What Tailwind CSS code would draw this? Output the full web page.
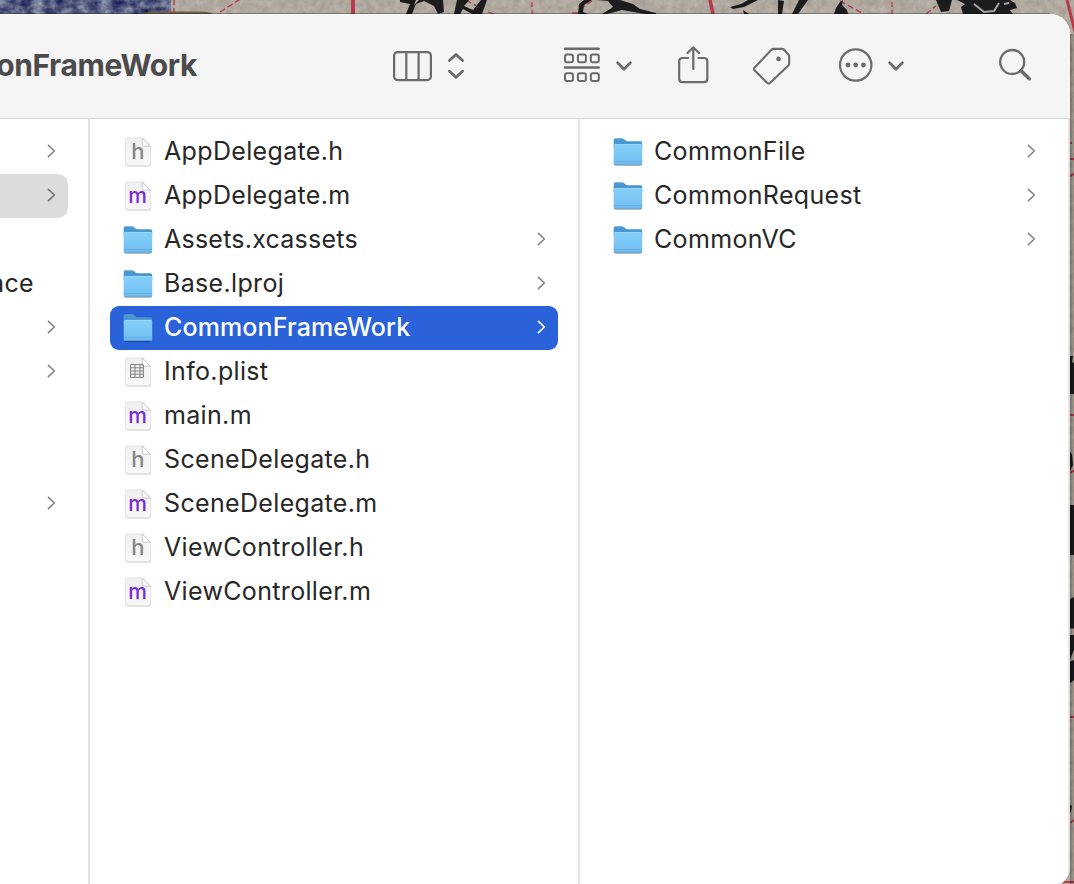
<!DOCTYPE html>
<html lang="en">
<head>
<meta charset="utf-8">
<title>CommonFrameWork</title>
<script src="https://cdn.jsdelivr.net/npm/@tailwindcss/browser@4"></script>
</head>
<body class="relative h-[884px] w-[1074px] overflow-hidden bg-[#a59c92] font-[Inter,'Liberation_Sans',sans-serif]">

<!-- desktop wallpaper -->
<svg class="absolute inset-0" width="1074" height="884" fill="none">
  <defs>
    <filter id="ink" x="0" y="0" width="100%" height="100%" color-interpolation-filters="sRGB">
      <feTurbulence type="fractalNoise" baseFrequency=".09 .12" numOctaves="4" seed="4"/>
      <feColorMatrix values=".8 0 0 0 -.06  .8 0 0 0 -.03  .6 0 0 0 .21  0 0 0 0 1"/>
    </filter>
    <filter id="paper" x="0" y="0" width="100%" height="100%" color-interpolation-filters="sRGB">
      <feTurbulence type="fractalNoise" baseFrequency=".15" numOctaves="3" seed="8"/>
      <feColorMatrix values=".14 0 0 0 .62  .14 0 0 0 .59  .14 0 0 0 .55  0 0 0 0 1"/>
    </filter>
    <linearGradient id="side" x1="0" x2="1"><stop stop-color="#000" stop-opacity=".35"/><stop offset="1" stop-color="#000" stop-opacity=".08"/></linearGradient>
  </defs>
  <rect x="170" width="904" height="24" filter="url(#paper)"/>
  <rect x="1048" width="26" height="884" filter="url(#paper)"/>
  <rect width="171" height="16" filter="url(#ink)"/>
  <path d="M142 14Q146 11 158 11.500H202Q210 12 213 14Z" fill="#70614d"/>
  <g stroke="#b93849" stroke-width="1.300">
    <path d="M174 0V14M532 2V14M892 2V14" stroke-dasharray="5 3"/>
    <path d="M220 12L242-2M580 9L592 1M466 0L480 8M488 12L494 14M572 13H578M840 1L864 14M926 14L936 6" stroke-dasharray="6 3"/>
    <path d="M353 0V14" stroke-width="4"/><path d="M710 0L713 14" stroke-width="3.500"/><path d="M1067 0L1075 32" stroke-width="3"/>
  </g>
  <g fill="#1c1b1e">
    <path d="M406 14L410 4L400 2V0H416L414 5L419 0H443L444 12L438 14L434 6L424 1L416 4L412 14Z"/>
    <path d="M454 14L457 0H469L464 6L473 10L481 0H487L482 14H472L463 9L460 14Z"/>
    <path d="M578 14L579 4L584 0H592L584 5L583 12L588 14ZM597 0H620L633 4L640 9L656 13V14H645L622 10L607 14H602L613 7L608 1Z"/>
    <path d="M730 7L741 4L748 0H758L744 7L733 9ZM743 10L749 14H744ZM778 0L784 1L782 14H778ZM799 0L808 0L798 14H792ZM834 14L836 8L840 2L843 0L842 5L847 10L848 14Z"/>
    <path d="M936 0H952L949 11L941 12Z"/>
    <path d="M957 0H1010L1015 3L1017 8L1010 10L1013 14H963L961 7L965 4Z"/>
    <path d="M1069 356H1073L1072 362L1074 363V394H1069ZM1069 451L1072 454L1073 465L1069 473ZM1069 505H1074V555H1069ZM1072 598L1074 597V632L1069 631V600ZM1069 635H1074V650L1069 662ZM1069 662L1074 660V680L1069 684ZM1069 804L1072 806L1071 812L1069 813Z"/>
  </g>
  <path d="M974 4L984 12L994 11L999 3M1004 4L1009 3" stroke="#a9a4a0" stroke-width="2"/>
  <path d="M1069 159H1074M1069 415H1074M1069 473L1074 471M1069 717H1074M1070 823L1074 820M1060 882H1074M1070 176L1074 174M1070 143H1072" stroke="#b93849" stroke-width="2"/>
  <path d="M1070 631H1074" stroke="#b9a49c" stroke-width="5"/>
  <rect x="1070" y="34" width="4" height="850" fill="url(#side)"/>
  <path d="M0 13.500H1050" stroke="#000" stroke-opacity=".3"/>
</svg>

<!-- shared icons -->
<svg width="0" height="0" class="absolute">
  <defs>
    <linearGradient id="fg" x1="0" y1="0" x2="0" y2="1"><stop stop-color="#86d0fa"/><stop offset="1" stop-color="#6fbdf0"/></linearGradient>
    <linearGradient id="fb" x1="0" y1="0" x2="0" y2="1"><stop stop-color="#519fd6"/><stop offset="1" stop-color="#3584c8"/></linearGradient>
    <linearGradient id="pg" x1="0" y1="0" x2="0" y2="1"><stop stop-color="#f0f0f0"/><stop offset="1" stop-color="#f8f8f8"/></linearGradient>
    <symbol id="folder" viewBox="0 0 32 32">
      <path d="M2 28.300H30Q29.500 30 28 30H4Q2.300 30 2 28.300Z" fill="#000" opacity=".28"/>
      <path d="M1.700 4Q1.700 2.300 3.300 2.300H10Q11.200 2.300 12.300 3.300L13.500 4.500Q14.300 5.200 15.500 5.200H28.500Q30.200 5.200 30.200 7V12H1.700Z" fill="url(#fb)"/>
      <path d="M1.700 9.500Q1.700 8 3.200 8H28.700Q30.200 8 30.200 9.500V27.500Q30.200 28.800 28.900 28.800H3Q1.700 28.800 1.700 27.500Z" fill="url(#fg)"/>
      <path d="M2.500 8.300H29.500" stroke="#a3dcfb" stroke-width=".7"/>
      <path d="M1.700 25.500H30.200" stroke="#5fabdc" stroke-width=".8"/>
      <path d="M1.900 28.400H30" stroke="#529fd3" stroke-width=".7"/>
    </symbol>
    <symbol id="page" viewBox="0 0 32 32">
      <path d="M3.300 28Q3.500 30.600 6 30.600H26Q28.600 30.600 28.800 28Z" fill="#000" opacity=".2"/>
      <path d="M3.500 4.200Q3.500 1.800 5.900 1.800H20.500L28.500 9.800V27.200Q28.500 29.700 26 29.700H6Q3.500 29.700 3.500 27.200Z" fill="url(#pg)" stroke="#d9d9d9" stroke-width=".6"/>
      <path d="M20.200 2V8.300Q20.200 10.100 22 10.100H28.300Z" fill="#fff" stroke="#bdbdbd" stroke-width=".8"/>
    </symbol>
    <symbol id="table" viewBox="0 0 32 32">
      <use href="#page"/>
      <path d="M8.600 8.600H21.400V21.400H8.600ZM8.600 11.800H21.400M8.600 15H21.400M8.600 18.200H21.400M13 8.600V21.400M18 8.600V21.400" fill="none" stroke="#808080" stroke-width="1"/>
    </symbol>
    <symbol id="chev" viewBox="0 0 10 14">
      <path d="M2.400 1.400L8.400 7L2.400 12.600" fill="none" stroke="currentColor" stroke-width="1.600" stroke-linecap="round" stroke-linejoin="round"/>
    </symbol>
    <symbol id="down" viewBox="0 0 18 12">
      <path d="M2.600 2.700L9 9.200L15.400 2.700" fill="none" stroke="currentColor" stroke-width="2.700" stroke-linecap="round" stroke-linejoin="round"/>
    </symbol>
  </defs>
</svg>

<main class="relative mt-[14px] flex h-[873px] w-[1070px] flex-col overflow-hidden rounded-r-[20px] bg-white">
  <header class="flex h-[105px] shrink-0 border-b border-[#d6d6d6] bg-[#f5f5f5] pb-[2px] text-[#6b6b6b] shadow-[inset_0_1px_0_#fff]">
    <h1 class="flex w-[197px] items-center justify-end whitespace-nowrap text-[30px] font-[650] tracking-[-0.4px] text-[#4b4b4b]"><span>CommonFrameWork</span></h1>
    <div class="ml-[195px] flex items-center gap-[14px] pt-px">
      <svg width="41" height="34" fill="none" stroke="currentColor" stroke-width="2.200"><rect x="2.100" y="3.100" width="36.800" height="28" rx="3.500"/><path d="M14.300 3V31M26.600 3V31"/></svg>
      <svg width="18" height="30" fill="none" stroke="currentColor" stroke-width="2.700" stroke-linecap="round" stroke-linejoin="round"><path d="M2.400 9.600L9 3.500L15.600 9.600M2.400 20.200L9 26.300L15.600 20.200"/></svg>
    </div>
    <div class="ml-[98px] flex items-center gap-[14px]">
      <svg width="38" height="38" fill="none" stroke="currentColor" stroke-width="2"><path d="M2 2.700H35.800M2 21.500H35.800" stroke-width="2.400" stroke-linecap="round"/><rect x="2" y="8.400" width="8" height="7.800" rx="2"/><rect x="14.900" y="8.400" width="8" height="7.800" rx="2"/><rect x="27.800" y="8.400" width="8" height="7.800" rx="2"/><rect x="2" y="27.200" width="8" height="7.800" rx="2"/><rect x="14.900" y="27.200" width="8" height="7.800" rx="2"/><rect x="27.800" y="27.200" width="8" height="7.800" rx="2"/></svg>
      <svg class="mt-[2px]" width="18" height="12"><use href="#down"/></svg>
    </div>
    <svg class="ml-[43.5px] self-center" width="33" height="40" fill="none" stroke="currentColor" stroke-width="2.200" stroke-linecap="round" stroke-linejoin="round"><path d="M11 13H5.500Q2.200 13 2.200 16.300V34Q2.200 37.200 5.500 37.200H27Q30.300 37.200 30.300 34V16.300Q30.300 13 27 13H21.500M16.300 24V2.500M10.500 8L16.300 2.300L22 8"/></svg>
    <svg class="ml-[42px] mt-px self-center" width="40" height="40" fill="none" stroke="currentColor" stroke-width="2.100" stroke-linejoin="round"><path d="M21.500 2.900H30.200Q31.300 2.900 32.100 3.700L36.500 8.800Q37.200 9.600 37.200 10.700V17.300Q37.200 18.500 36.300 19.400L18.300 36.800Q16.700 38.400 15.100 36.800L2.800 24.500Q1.300 22.900 2.900 21.300L19.500 3.800Q20.400 2.900 21.500 2.900Z"/><circle cx="26.500" cy="12.900" r="2.300" fill="currentColor" stroke="none"/></svg>
    <div class="ml-[46.5px] flex items-center gap-[13px]">
      <svg width="36" height="36" fill="none" stroke="currentColor" stroke-width="2.200"><circle cx="17.700" cy="18" r="15.700"/><g fill="currentColor" stroke="none"><circle cx="10" cy="18" r="2.400"/><circle cx="17.700" cy="18" r="2.400"/><circle cx="25.400" cy="18" r="2.400"/></g></svg>
      <svg class="mt-[2px]" width="18" height="12"><use href="#down"/></svg>
    </div>
    <svg class="ml-[92px] self-center" width="36" height="36" fill="none" stroke="currentColor"><circle cx="15.200" cy="15" r="12" stroke-width="2.300"/><path d="M24.300 24L32.300 31.700" stroke-width="3.500" stroke-linecap="round"/></svg>
  </header>

  <div class="flex min-h-0 flex-1 text-[25px] tracking-[0.34px] text-[#272727]">
    <section class="flex w-[90px] shrink-0 flex-col border-r-2 border-[#e3e3e3] pt-[11px] text-[#858585]">
      <div class="flex h-[44px] items-center pb-[2px] pl-[46px]"><svg width="10" height="14"><use href="#chev"/></svg></div>
      <div class="flex h-[44px] w-[68px] items-center rounded-r-[10px] bg-[#dcdcdc] pb-[2px] pl-[46px] text-[#707070]"><svg width="10" height="14"><use href="#chev"/></svg></div>
      <div class="h-[44px]"></div>
      <div class="flex h-[44px] w-[34px] items-center justify-end whitespace-nowrap text-[#272727]"><span>ace</span></div>
      <div class="flex h-[44px] items-center pb-[2px] pl-[46px]"><svg width="10" height="14"><use href="#chev"/></svg></div>
      <div class="flex h-[44px] items-center pb-[2px] pl-[46px]"><svg width="10" height="14"><use href="#chev"/></svg></div>
      <div class="h-[88px]"></div>
      <div class="flex h-[44px] items-center pb-[2px] pl-[46px]"><svg width="10" height="14"><use href="#chev"/></svg></div>
    </section>

    <section class="flex w-[490px] shrink-0 flex-col border-r-2 border-[#e3e3e3] px-[20px] pt-[11px]">
      <div class="flex h-[44px] items-center gap-[10px] px-[12px]"><div class="relative size-8"><svg width="32" height="32"><use href="#page"/></svg><span class="absolute inset-0 text-center text-[22px] font-medium leading-[30px] text-[#858585]">h</span></div><span>AppDelegate.h</span></div>
      <div class="flex h-[44px] items-center gap-[10px] px-[12px]"><div class="relative size-8"><svg width="32" height="32"><use href="#page"/></svg><span class="absolute inset-0 -left-px text-center text-[21px] font-medium leading-[32px] tracking-normal text-[#7a2bd8]">m</span></div><span>AppDelegate.m</span></div>
      <div class="flex h-[44px] items-center gap-[10px] px-[12px]"><svg width="32" height="32"><use href="#folder"/></svg><span class="tracking-[0.24px]">Assets.xcassets</span><svg class="mb-[2px] ml-auto text-[#858585]" width="10" height="14"><use href="#chev"/></svg></div>
      <div class="flex h-[44px] items-center gap-[10px] px-[12px]"><svg width="32" height="32"><use href="#folder"/></svg><span>Base.lproj</span><svg class="mb-[2px] ml-auto text-[#858585]" width="10" height="14"><use href="#chev"/></svg></div>
      <div class="flex h-[44px] items-center gap-[10px] rounded-[9px] bg-[#2962d9] px-[12px] font-medium tracking-[0.13px] text-white"><svg width="32" height="32"><use href="#folder"/></svg><span>CommonFrameWork</span><svg class="mb-[2px] ml-auto" width="10" height="14"><use href="#chev"/></svg></div>
      <div class="flex h-[44px] items-center gap-[10px] px-[12px]"><svg width="32" height="32"><use href="#table"/></svg><span>Info.plist</span></div>
      <div class="flex h-[44px] items-center gap-[10px] px-[12px]"><div class="relative size-8"><svg width="32" height="32"><use href="#page"/></svg><span class="absolute inset-0 -left-px text-center text-[21px] font-medium leading-[32px] tracking-normal text-[#7a2bd8]">m</span></div><span>main.m</span></div>
      <div class="flex h-[44px] items-center gap-[10px] px-[12px]"><div class="relative size-8"><svg width="32" height="32"><use href="#page"/></svg><span class="absolute inset-0 text-center text-[22px] font-medium leading-[30px] text-[#858585]">h</span></div><span>SceneDelegate.h</span></div>
      <div class="flex h-[44px] items-center gap-[10px] px-[12px]"><div class="relative size-8"><svg width="32" height="32"><use href="#page"/></svg><span class="absolute inset-0 -left-px text-center text-[21px] font-medium leading-[32px] tracking-normal text-[#7a2bd8]">m</span></div><span>SceneDelegate.m</span></div>
      <div class="flex h-[44px] items-center gap-[10px] px-[12px]"><div class="relative size-8"><svg width="32" height="32"><use href="#page"/></svg><span class="absolute inset-0 text-center text-[22px] font-medium leading-[30px] text-[#858585]">h</span></div><span>ViewController.h</span></div>
      <div class="flex h-[44px] items-center gap-[10px] px-[12px]"><div class="relative size-8"><svg width="32" height="32"><use href="#page"/></svg><span class="absolute inset-0 -left-px text-center text-[21px] font-medium leading-[32px] tracking-normal text-[#7a2bd8]">m</span></div><span>ViewController.m</span></div>
    </section>

    <section class="flex w-[490px] shrink-0 flex-col border-r-2 border-[#e3e3e3] px-[20px] pt-[11px]">
      <div class="flex h-[44px] items-center gap-[10px] px-[12px]"><svg width="32" height="32"><use href="#folder"/></svg><span>CommonFile</span><svg class="mb-[2px] ml-auto text-[#858585]" width="10" height="14"><use href="#chev"/></svg></div>
      <div class="flex h-[44px] items-center gap-[10px] px-[12px]"><svg width="32" height="32"><use href="#folder"/></svg><span>CommonRequest</span><svg class="mb-[2px] ml-auto text-[#858585]" width="10" height="14"><use href="#chev"/></svg></div>
      <div class="flex h-[44px] items-center gap-[10px] px-[12px]"><svg width="32" height="32"><use href="#folder"/></svg><span>CommonVC</span><svg class="mb-[2px] ml-auto text-[#858585]" width="10" height="14"><use href="#chev"/></svg></div>
    </section>
  </div>
</main>
</body>
</html>
